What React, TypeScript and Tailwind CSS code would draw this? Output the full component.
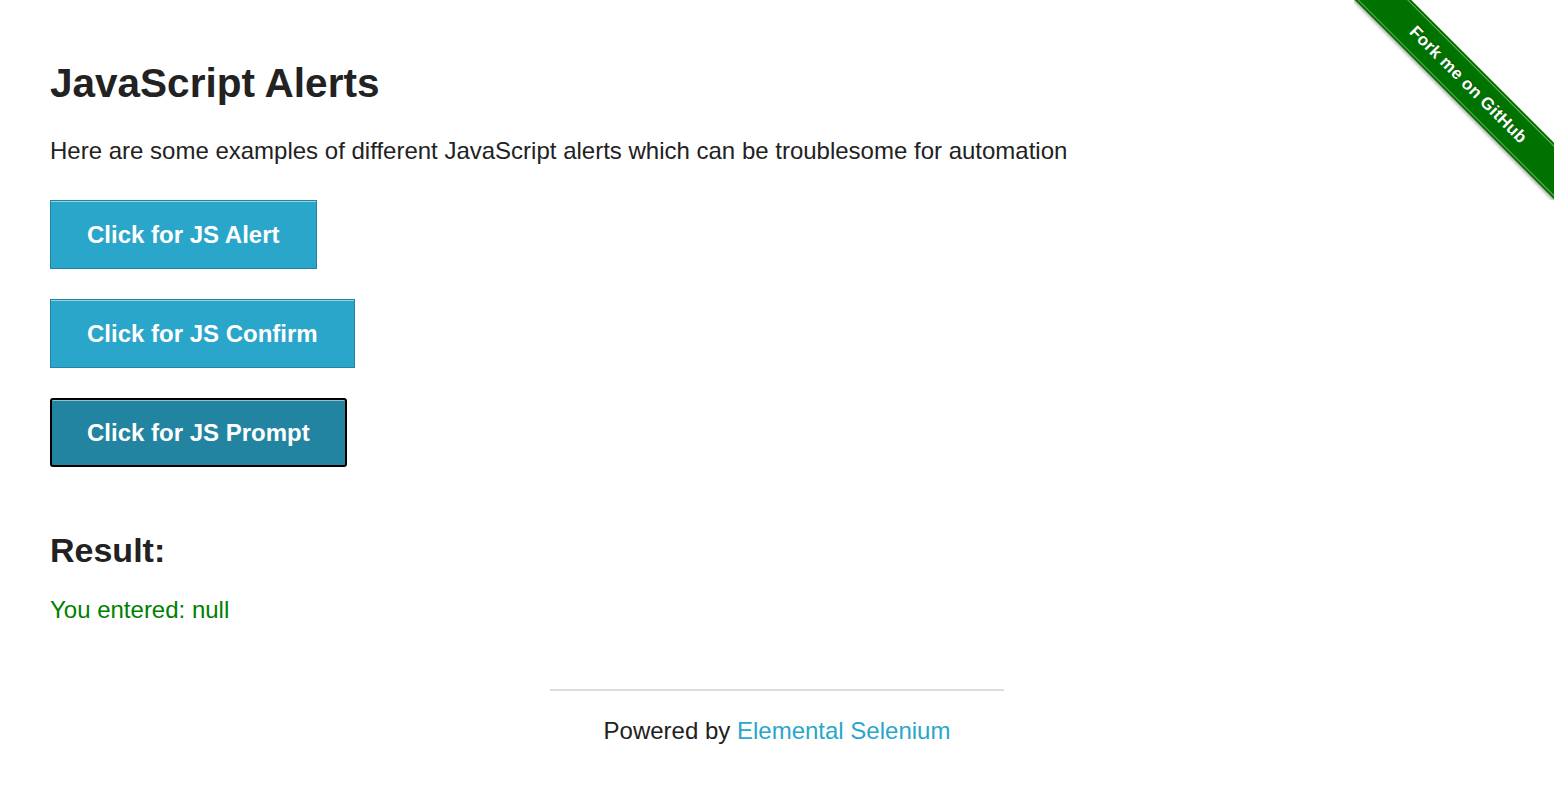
import React from "react"

const buttons = [
  { label: "Click for JS Alert", focused: false },
  { label: "Click for JS Confirm", focused: false },
  { label: "Click for JS Prompt", focused: true },
]

function ForkRibbon() {
  return (
    <div className="absolute top-0 right-0 w-[200px] h-[200px] overflow-hidden pointer-events-none">
      <div className="absolute left-[-36px] top-[65px] w-[300px] h-[40px] rotate-45 bg-[#007200] shadow-[0_2px_3px_rgba(0,0,0,0.3)] flex items-center">
        <div className="w-full h-[36px] border-y border-white/40 flex items-center justify-center">
          <span className="text-white text-[17px] font-bold tracking-[0.3px] [text-shadow:0_-1px_0_rgba(0,0,0,0.4)]">
            Fork me on GitHub
          </span>
        </div>
      </div>
    </div>
  )
}

export default function App() {
  return (
    <div className="relative min-h-[794px] bg-white text-[#222222] font-['Liberation_Sans',Arial,sans-serif]">
      <ForkRibbon />

      <div className="px-[50px] pt-[59px]">
        <h3 className="text-[40.5px] font-bold leading-[48px]">JavaScript Alerts</h3>
        <p className="mt-[29px] text-[24px] leading-[30px]">
          Here are some examples of different JavaScript alerts which can be troublesome for automation
        </p>

        <ul className="mt-[34px] flex flex-col items-start gap-[30px]">
          {buttons.map((b) => (
            <li key={b.label}>
              <button
                className={
                  b.focused
                    ? "h-[69px] px-[35px] flex items-center bg-[#2284a1] border-2 border-black rounded-[3px] text-white text-[24px] font-bold leading-[28px] shadow-[inset_0_1px_0_rgba(255,255,255,0.5)]"
                    : "h-[69px] px-[36px] flex items-center bg-[#2ba6cb] border border-[#2284a1] text-white text-[24px] font-bold leading-[28px] shadow-[inset_0_1px_0_rgba(255,255,255,0.5)]"
                }
              >
                {b.label}
              </button>
            </li>
          ))}
        </ul>

        <h4 className="mt-[63px] text-[34px] font-bold leading-[40px]">Result:</h4>
        <p className="mt-[25px] text-[24px] leading-[30px] text-[#008000]">You entered: null</p>
      </div>

      <div className="mt-[64px] flex flex-col items-center">
        <hr className="w-[454px] border-0 border-t-2 border-[#dddddd]" />
        <div className="mt-[25px] text-[24px] leading-[30px]">
          Powered by <a className="text-[#2ba6cb]">Elemental Selenium</a>
        </div>
      </div>
    </div>
  )
}
